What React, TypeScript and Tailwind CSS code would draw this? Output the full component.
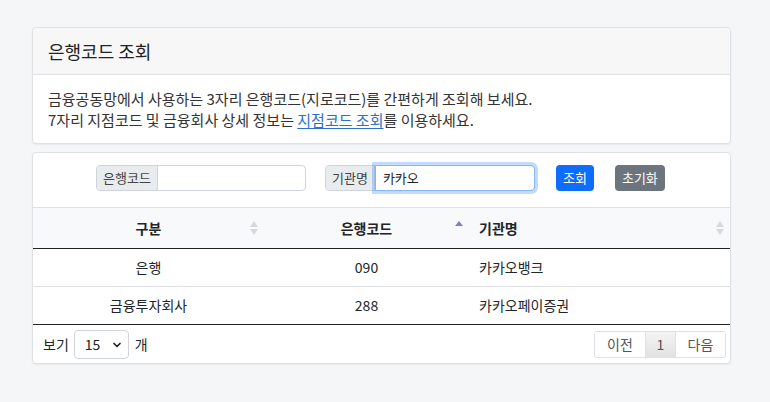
import { ChevronDown } from "lucide-react";

function SortIcon({ active }: { active?: boolean }) {
  if (active) {
    return (
      <svg width="8" height="12" viewBox="0 0 8 12" className="absolute right-[6px] top-[12px]">
        <path d="M4 1 L8 6 L0 6 Z" fill="#7b7fd4" />
      </svg>
    );
  }
  return (
    <svg width="8" height="14" viewBox="0 0 8 14" className="absolute right-[6px] top-[13px]">
      <path d="M4 0 L8 6 L0 6 Z" fill="#d6d8db" />
      <path d="M4 14 L8 8 L0 8 Z" fill="#d6d8db" />
    </svg>
  );
}

const rows = [
  { type: "은행", code: "090", name: "카카오뱅크" },
  { type: "금융투자회사", code: "288", name: "카카오페이증권" },
];

export default function App() {
  return (
    <div
      className="min-h-[402px] bg-[#f5f6f8] px-[32px] pt-[27px] text-[14px] text-[#212529]"
      style={{ fontFamily: '"Noto Sans CJK KR", "Noto Sans", sans-serif' }}
    >
      <div className="w-[699px] bg-white border border-[#dfe1e4] rounded shadow-[0_1px_2px_rgba(0,0,0,0.06)]">
        <div className="h-[47px] bg-[#f7f7f7] border-b border-[#dfe1e4] flex items-center px-[15px] rounded-t">
          <h2 className="text-[18px] font-normal text-[#222]">은행코드 조회</h2>
        </div>
        <div className="px-[15px] pt-[13px] pb-[13px] leading-[21px] text-[15px] text-[#333]">
          <p>금융공동망에서 사용하는 3자리 은행코드(지로코드)를 간편하게 조회해 보세요.</p>
          <p>
            7자리 지점코드 및 금융회사 상세 정보는{" "}
            <a href="#" className="text-[#2a6fc9] underline underline-offset-2">지점코드 조회</a>를 이용하세요.
          </p>
        </div>
      </div>

      <div className="mt-[8px] w-[699px] bg-white border border-[#dfe1e4] rounded shadow-[0_1px_2px_rgba(0,0,0,0.06)]">
        <div className="h-[54px] flex items-start pt-[12px] pl-[63px]">
          <div className="flex h-[26px] w-[210px] border border-[#ced4da] rounded">
            <span className="px-[6px] flex items-center bg-[#e9ecef] border-r border-[#ced4da] text-[#444] text-[13px] rounded-l">은행코드</span>
            <input className="flex-1 min-w-0 outline-none px-2 rounded-r" />
          </div>
          <div className="ml-[19px] flex h-[26px] w-[210px] border border-[#ced4da] rounded">
            <span className="px-[6px] flex items-center bg-[#e9ecef] border-r border-[#ced4da] text-[#444] text-[13px] rounded-l">기관명</span>
            <input
              defaultValue="카카오"
              className="flex-1 min-w-0 outline-none px-[7px] text-[13px] rounded-r border border-[#86b7fe] -my-px -mr-px shadow-[0_0_0_3px_rgba(13,110,253,0.25)]"
            />
          </div>
          <button className="ml-[21px] h-[26px] px-[7px] bg-[#0d6efd] text-white text-[13px] rounded">조회</button>
          <button className="ml-[21px] h-[26px] px-[7px] bg-[#6c757d] text-white text-[13px] rounded">초기화</button>
        </div>

        <table className="w-full border-collapse">
          <thead>
            <tr className="bg-[#f8f9fb] border-t border-[#dee2e6] border-b border-b-[#222]">
              <th className="relative w-[231px] h-[41px] font-bold text-center">구분<SortIcon /></th>
              <th className="relative w-[205px] h-[41px] font-bold text-center">은행코드<SortIcon active /></th>
              <th className="relative h-[41px] font-bold text-left pl-[10px]">기관명<SortIcon /></th>
            </tr>
          </thead>
          <tbody>
            {rows.map((r, i) => (
              <tr key={r.code} className={i === rows.length - 1 ? "border-b border-[#222]" : "border-b border-[#dee2e6]"}>
                <td className="h-[38px] text-center">{r.type}</td>
                <td className="h-[38px] text-center">{r.code}</td>
                <td className="h-[38px] pl-[10px]">{r.name}</td>
              </tr>
            ))}
          </tbody>
        </table>

        <div className="h-[38px] flex items-center justify-between px-[10px]">
          <div className="flex items-center gap-[5px]">
            <span>보기</span>
            <div className="relative h-[29px] w-[55px] border border-[#ced4da] rounded flex items-center pl-[10px]">
              <span>15</span>
              <ChevronDown className="absolute right-[5px] top-[8px] w-[12px] h-[12px]" strokeWidth={3.5} />
            </div>
            <span className="ml-[1px]">개</span>
          </div>
          <div className="flex h-[27px] border border-[#dee2e6] rounded-[3px] text-[#555] -mr-[6px]">
            <span className="w-[50px] flex items-center justify-center">이전</span>
            <span className="w-[31px] flex items-center justify-center border-x border-[#dee2e6] bg-gradient-to-b from-[#f4f4f4] to-[#e2e2e2]">1</span>
            <span className="w-[49px] flex items-center justify-center">다음</span>
          </div>
        </div>
      </div>
    </div>
  );
}
